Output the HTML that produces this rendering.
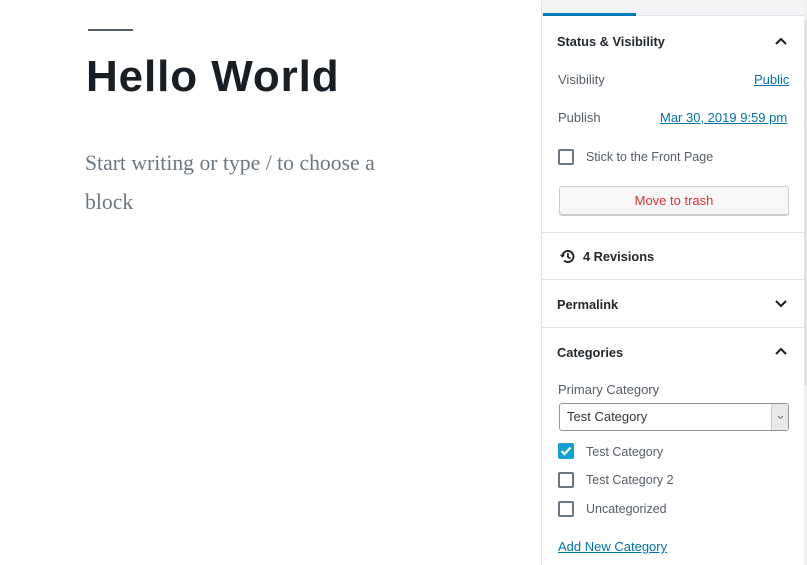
<!DOCTYPE html>
<html><head><style>
*{box-sizing:border-box;margin:0;padding:0}
body{width:807px;height:565px;overflow:hidden;background:#fff;font-family:"Liberation Sans",sans-serif;position:relative}
.abs{position:absolute}
.sb{position:absolute;left:541px;top:0;width:266px;height:565px;border-left:1px solid #e2e4e7;background:#fff}
.t{font-size:13px;color:#191e23;position:absolute}
.h{font-weight:bold;font-size:12.8px;color:#23282d}
.g{color:#555d66}
.lk{color:#0073aa;text-decoration:underline}
.hr{position:absolute;left:0;width:263px;height:1px;background:#e2e4e7}
.cb{position:absolute;left:16px;width:16px;height:16px;border:2px solid #6c7781;border-radius:2px;background:#fff}
.chev{position:absolute;left:232px;width:14px;height:14px}
</style></head><body>
<div class="abs" style="left:88px;top:29px;width:45px;height:2px;background:#555d66"></div>
<div class="abs" style="left:86px;top:52px;font-size:44px;font-weight:bold;color:#191e23;letter-spacing:0.9px">Hello World</div>
<div class="abs" style="left:85px;top:144px;font-family:'Liberation Serif',serif;font-size:21.7px;line-height:39px;color:#6c7781;width:320px">Start writing or type / to choose a block</div>

<div class="sb">
<div class="abs" style="left:0;top:0;width:265px;height:16px;background:#f3f4f5;border-bottom:1px solid #e2e4e7"></div>
<div class="abs" style="left:1px;top:13px;width:93px;height:3px;background:#007cba"></div>
<div class="t h" style="left:15px;top:34px">Status &amp; Visibility</div>
<svg class="chev" style="top:35px" viewBox="0 0 14 14"><path d="M2 9l5-5 5 5" stroke="#191e23" stroke-width="2" fill="none"/></svg>
<div class="t g" style="left:16px;top:72px">Visibility</div>
<div class="t lk" style="left:212px;top:72px">Public</div>
<div class="t g" style="left:16px;top:110px">Publish</div>
<div class="t lk" style="left:118px;top:110px">Mar 30, 2019 9:59 pm</div>
<div class="cb" style="top:149px"></div>
<div class="t g" style="left:44px;top:150px;font-size:12.5px">Stick to the Front Page</div>
<div class="abs" style="left:17px;top:186px;width:230px;height:29px;border:1px solid #ccc;border-radius:3px;background:#f7f7f7;box-shadow:0 1px 0 #ccc;text-align:center;font-size:13px;line-height:27px;color:#dc3232">Move to trash</div>
<div class="hr" style="top:232px"></div>
<svg class="abs" style="left:17px;top:248px" width="17" height="17" viewBox="0 0 20 20"><path d="M4 10a6.5 6.5 0 1 1 2 4.7" stroke="#191e23" stroke-width="2.2" fill="none"/><path d="M1 8l3 3.5 3-3.5z" fill="#191e23"/><path d="M10.5 6v4.5l3 2" stroke="#191e23" stroke-width="2" fill="none"/></svg>
<div class="t h" style="left:41px;top:249px">4 Revisions</div>
<div class="hr" style="top:279px"></div>
<div class="t h" style="left:15px;top:297px">Permalink</div>
<svg class="chev" style="top:296px" viewBox="0 0 14 14"><path d="M2 5l5 5 5-5" stroke="#191e23" stroke-width="2" fill="none"/></svg>
<div class="hr" style="top:327px"></div>
<div class="t h" style="left:15px;top:345px">Categories</div>
<svg class="chev" style="top:345px" viewBox="0 0 14 14"><path d="M2 9l5-5 5 5" stroke="#191e23" stroke-width="2" fill="none"/></svg>
<div class="t g" style="left:16px;top:382px">Primary Category</div>
<div class="abs" style="left:17px;top:403px;width:230px;height:28px;border:1px solid #8d96a0;border-radius:3px;background:#fff;font-size:13px;line-height:26px;color:#32373c;padding-left:7px">Test Category
<div class="abs" style="right:0;top:0;width:17px;height:26px;background:#e8e8e8;border-left:1px solid #ccc"><svg width="17" height="26" viewBox="0 0 17 26"><path d="M6 12l2.5 2.5L11 12" stroke="#777" fill="none"/></svg></div></div>
<div class="abs" style="left:16px;top:443px;width:16px;height:16px;background:#11a0d2;border-radius:2px"><svg width="16" height="16" viewBox="0 0 16 16"><path d="M3.5 8l3 3 6-6.5" stroke="#fff" stroke-width="2.2" fill="none"/></svg></div>
<div class="t g" style="left:44px;top:445px;font-size:12.5px">Test Category</div>
<div class="cb" style="top:472px"></div>
<div class="t g" style="left:44px;top:473px;font-size:12.5px">Test Category 2</div>
<div class="cb" style="top:501px"></div>
<div class="t g" style="left:44px;top:502px;font-size:12.5px">Uncategorized</div>
<div class="t lk" style="left:16px;top:539px">Add New Category</div>
<div class="abs" style="left:262px;top:0;width:3px;height:565px;background:#f0f0f0"></div>
<div class="abs" style="left:262px;top:20px;width:3px;height:365px;background:#e2e2e2"></div>
</div>
</body></html>
